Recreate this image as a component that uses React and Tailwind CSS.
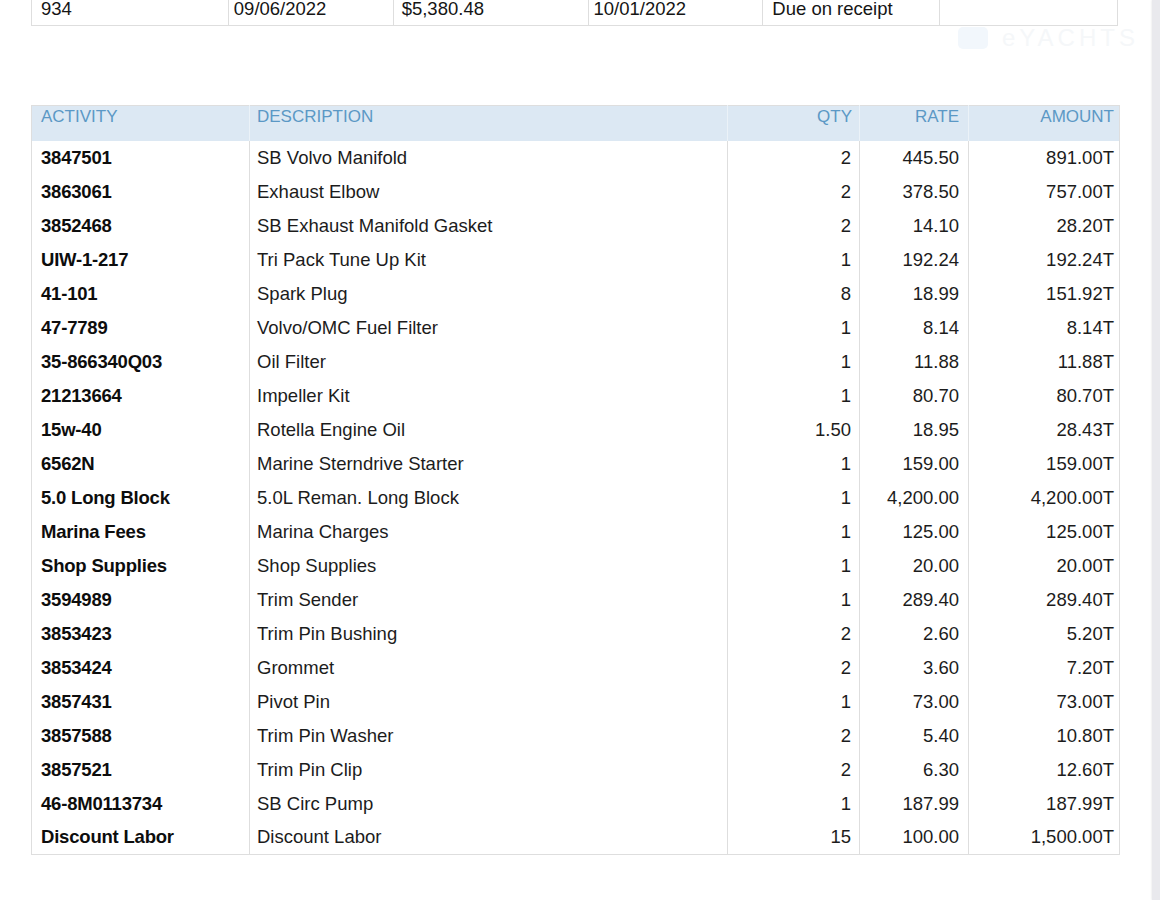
import React from "react";

const topRow = [
  { text: "934", w: "w-[197px]", pl: "pl-[9px]" },
  { text: "09/06/2022", w: "w-[165px]", pl: "pl-[5px]" },
  { text: "$5,380.48", w: "w-[196px]", pl: "pl-[8px]" },
  { text: "10/01/2022", w: "w-[174px]", pl: "pl-[4px]" },
  { text: "Due on receipt", w: "w-[177px]", pl: "pl-[9px]" },
  { text: "", w: "w-[178px]", pl: "pl-[9px]" },
];

const items = [
  ["3847501", "SB Volvo Manifold", "2", "445.50", "891.00T"],
  ["3863061", "Exhaust Elbow", "2", "378.50", "757.00T"],
  ["3852468", "SB Exhaust Manifold Gasket", "2", "14.10", "28.20T"],
  ["UIW-1-217", "Tri Pack Tune Up Kit", "1", "192.24", "192.24T"],
  ["41-101", "Spark Plug", "8", "18.99", "151.92T"],
  ["47-7789", "Volvo/OMC Fuel Filter", "1", "8.14", "8.14T"],
  ["35-866340Q03", "Oil Filter", "1", "11.88", "11.88T"],
  ["21213664", "Impeller Kit", "1", "80.70", "80.70T"],
  ["15w-40", "Rotella Engine Oil", "1.50", "18.95", "28.43T"],
  ["6562N", "Marine Sterndrive Starter", "1", "159.00", "159.00T"],
  ["5.0 Long Block", "5.0L Reman. Long Block", "1", "4,200.00", "4,200.00T"],
  ["Marina Fees", "Marina Charges", "1", "125.00", "125.00T"],
  ["Shop Supplies", "Shop Supplies", "1", "20.00", "20.00T"],
  ["3594989", "Trim Sender", "1", "289.40", "289.40T"],
  ["3853423", "Trim Pin Bushing", "2", "2.60", "5.20T"],
  ["3853424", "Grommet", "2", "3.60", "7.20T"],
  ["3857431", "Pivot Pin", "1", "73.00", "73.00T"],
  ["3857588", "Trim Pin Washer", "2", "5.40", "10.80T"],
  ["3857521", "Trim Pin Clip", "2", "6.30", "12.60T"],
  ["46-8M0113734", "SB Circ Pump", "1", "187.99", "187.99T"],
  ["Discount Labor", "Discount Labor", "15", "100.00", "1,500.00T"],
];

const App = () => {
  return (
    <div
      className="flex h-[900px] w-[1160px] overflow-hidden bg-white text-[#151515]"
      style={{ fontFamily: '"Liberation Sans", Arial, sans-serif' }}
    >
      <div className="relative flex-1">
        {/* watermark */}
        <div className="absolute left-[958px] top-[20px] flex items-center gap-[14px]">
          <div className="h-[22px] w-[30px] rounded-[5px] bg-[#f2f7fc]" />
          <span className="text-[24px] tracking-[4px] text-[#f5f7f9]">eYACHTS</span>
        </div>

        {/* top info row (cut off) */}
        <div className="ml-[31px] mt-[-7px] flex h-[33px] w-[1087px] border-b border-l border-[#dedede] text-[18.5px] leading-none">
          {topRow.map((c, i) => (
            <div
              key={i}
              className={`${c.w} ${c.pl} flex h-full items-center border-r border-[#dedede]`}
            >
              {c.text}
            </div>
          ))}
        </div>

        {/* items table */}
        <table className="ml-[31px] mt-[79px] w-[1088px] table-fixed border-collapse border border-[#dedede]">
          <colgroup>
            <col className="w-[218px]" />
            <col className="w-[478px]" />
            <col className="w-[132px]" />
            <col className="w-[109px]" />
            <col className="w-[151px]" />
          </colgroup>
          <thead>
            <tr className="bg-[#dce8f3] text-[17px] leading-[20px] text-[#5b98c5]">
              <th className="h-[35px] border-r border-[#ebf2f8] pt-[1px] pl-[9px] text-left align-top font-normal">ACTIVITY</th>
              <th className="h-[35px] border-r border-[#ebf2f8] pt-[1px] pl-[7px] text-left align-top font-normal">DESCRIPTION</th>
              <th className="h-[35px] border-r border-[#ebf2f8] pt-[1px] pr-[7px] text-right align-top font-normal">QTY</th>
              <th className="h-[35px] border-r border-[#ebf2f8] pt-[1px] pr-[9px] text-right align-top font-normal">RATE</th>
              <th className="h-[35px] pt-[1px] pr-[5px] text-right align-top font-normal">AMOUNT</th>
            </tr>
          </thead>
          <tbody className="text-[18.5px] leading-[22px]">
            {items.map((r, i) => (
              <tr key={i} className="h-[34px]">
                <td className="border-r border-[#dedede] pl-[9px] font-bold tracking-[-0.2px] text-[#0d0d0d]">{r[0]}</td>
                <td className="border-r border-[#dedede] pl-[7px] text-[#1c1c1c]">{r[1]}</td>
                <td className="border-r border-[#dedede] pr-[8px] text-right text-[#1c1c1c]">{r[2]}</td>
                <td className="border-r border-[#dedede] pr-[9px] text-right text-[#1c1c1c]">{r[3]}</td>
                <td className="pr-[5px] text-right text-[#1c1c1c]">{r[4]}</td>
              </tr>
            ))}
          </tbody>
        </table>
      </div>

      {/* page edge */}
      <div className="h-full w-[8px] bg-[#e9e9ed] shadow-[-1px_0_2px_rgba(0,0,0,0.06)]" />
    </div>
  );
};

export default App;
